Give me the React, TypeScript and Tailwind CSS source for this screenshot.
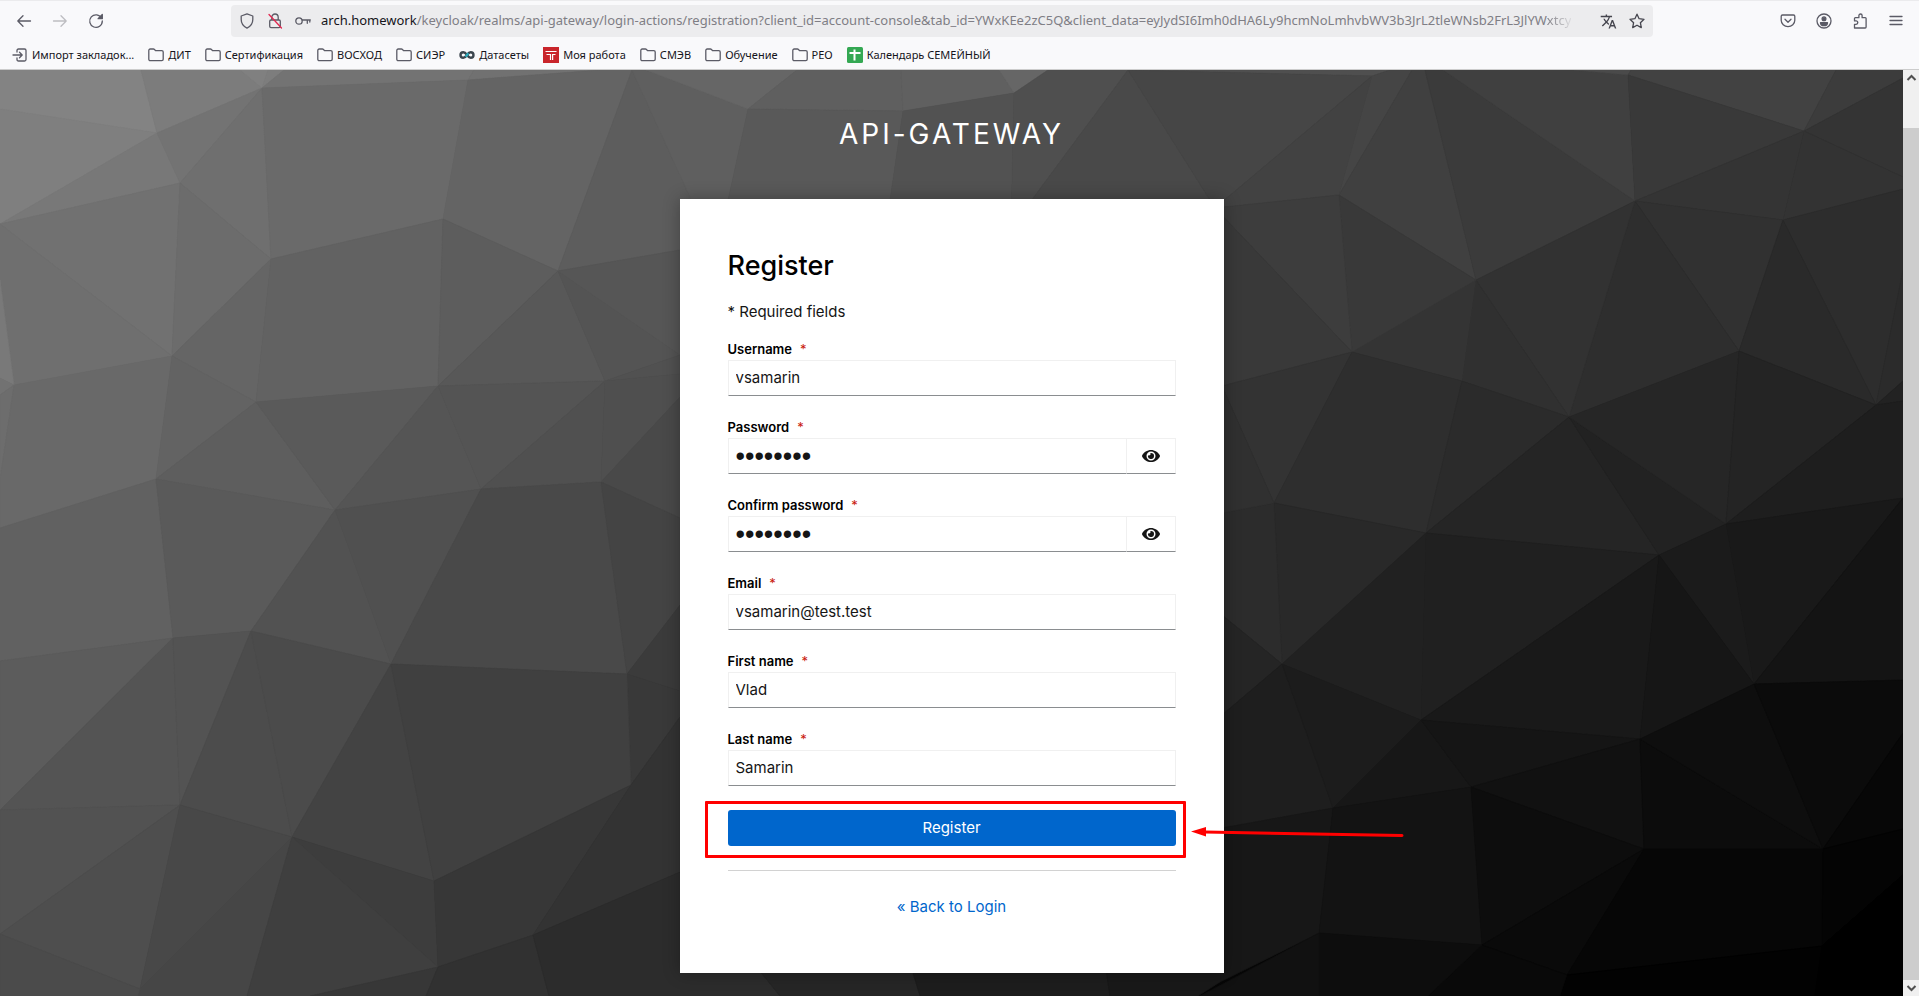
import type { ReactNode } from "react";
import { FaEye } from "react-icons/fa";
import { MdTranslate } from "react-icons/md";

type Facet = [fill: string, points: string];

const FACETS: Facet[] = [
  ["#838383", "0,0 141,0 157,63 0,39"],
  ["#7c7c7c", "141,0 240,0 262,18 157,63"],
  ["#808080", "240,0 268,0 262,18"],
  ["#7d7d7d", "268,0 284,0 262,18"],
  ["#7f7f7f", "0,39 157,63 0,154"],
  ["#787878", "157,63 180,113 0,154"],
  ["#737373", "157,63 262,18 180,113"],
  ["#6f6f6f", "262,18 271,189 180,113"],
  ["#737373", "284,0 474,0 468,10 262,18"],
  ["#6a6a6a", "262,18 468,10 443,149 271,189"],
  ["#717171", "474,0 600,0 468,10"],
  ["#646464", "468,10 600,0 632,0 558,201 443,149"],
  ["#5d5d5d", "632,0 704,158 680,180 558,201"],
  ["#5f5f5f", "632,0 646,0 748,39 722,158 704,158"],
  ["#666666", "646,0 797,0 748,39"],
  ["#5f5f5f", "797,0 901,0 903,41 748,39"],
  ["#606060", "901,0 999,0 1014,23 903,41"],
  ["#666666", "999,0 1048,0 1014,23"],
  ["#595959", "748,39 903,41 886,158 722,158"],
  ["#525252", "903,41 1014,23 1011,158 886,158"],
  ["#4f4f4f", "1014,23 1048,0 1128,0 1011,158"],
  ["#494949", "1128,0 1215,138 1011,158"],
  ["#4f4f4f", "1128,0 1390,0 1372,6"],
  ["#464646", "1128,0 1372,6 1215,138"],
  ["#424242", "1372,6 1339,125 1215,138"],
  ["#454545", "1372,6 1390,0 1412,0 1339,125"],
  ["#404040", "1412,0 1425,0 1476,210 1339,125"],
  ["#3b3b3b", "1425,0 1443,0 1635,131 1476,210"],
  ["#404040", "1443,0 1574,0 1628,5 1635,131"],
  ["#4a4a4a", "1574,0 1631,0 1628,5"],
  ["#424242", "1631,0 1836,0 1804,61 1628,5"],
  ["#393939", "1628,5 1804,61 1635,131"],
  ["#3c3c3c", "1836,0 1903,0 1903,8 1804,61"],
  ["#343434", "1804,61 1903,8 1903,107"],
  ["#333333", "1804,61 1903,107 1903,119 1783,150"],
  ["#343434", "1804,61 1783,150 1635,131"],
  ["#313131", "1635,131 1783,150 1739,281"],
  ["#2d2d2d", "1783,150 1903,119 1903,200 1876,335"],
  ["#2a2a2a", "1783,150 1876,335 1739,281"],
  ["#2b2b2b", "1876,335 1903,200 1903,311"],
  ["#2e2e2e", "1635,131 1739,281 1569,347"],
  ["#323232", "1635,131 1569,347 1476,210"],
  ["#303030", "1476,210 1569,347 1462,311"],
  ["#343434", "1476,210 1462,311 1352,282"],
  ["#393939", "1339,125 1476,210 1352,282"],
  ["#3d3d3d", "1339,125 1352,282 1215,138"],
  ["#393939", "1215,138 1352,282 1222,316"],
  ["#333333", "1352,282 1274,433 1222,316"],
  ["#2e2e2e", "1352,282 1462,311 1426,463 1274,433"],
  ["#2b2b2b", "1462,311 1569,347 1426,463"],
  ["#252525", "1569,347 1426,463 1659,485"],
  ["#222222", "1569,347 1726,454 1659,485"],
  ["#262626", "1569,347 1739,281 1726,454"],
  ["#242424", "1739,281 1876,335 1726,454"],
  ["#222222", "1876,335 1903,311 1903,331"],
  ["#1e1e1e", "1876,335 1903,331 1903,428 1726,454"],
  ["#191919", "1726,454 1903,428 1754,614"],
  ["#141414", "1754,614 1903,428 1903,610"],
  ["#1b1b1b", "1726,454 1659,485 1754,614"],
  ["#202020", "1426,463 1659,485 1421,650"],
  ["#292929", "1274,433 1426,463 1282,594"],
  ["#212121", "1282,594 1426,463 1421,650"],
  ["#191919", "1659,485 1421,650 1640,669"],
  ["#161616", "1659,485 1754,614 1640,669"],
  ["#2c2c2c", "1274,433 1282,594 1222,545 1222,443"],
  ["#303030", "1222,316 1274,433 1222,443"],
  ["#252525", "1282,594 1222,545 1222,645"],
  ["#1e1e1e", "1222,645 1282,594 1333,738 1222,758"],
  ["#1c1c1c", "1282,594 1421,650 1333,738"],
  ["#171717", "1421,650 1333,738 1471,717"],
  ["#151515", "1421,650 1471,717 1640,669"],
  ["#111111", "1640,669 1471,717 1644,779"],
  ["#0c0c0c", "1640,669 1644,779 1823,779"],
  ["#0e0e0e", "1640,669 1754,614 1823,779"],
  ["#0b0b0b", "1754,614 1903,610 1903,663 1823,779"],
  ["#070707", "1823,779 1903,663 1903,759"],
  ["#171717", "1333,738 1222,758 1220,912 1319,863"],
  ["#131313", "1333,738 1471,717 1482,875 1319,863"],
  ["#0d0d0d", "1471,717 1644,779 1482,875"],
  ["#0a0a0a", "1644,779 1482,875 1567,905"],
  ["#060606", "1644,779 1823,779 1822,876 1567,905"],
  ["#040404", "1823,779 1903,759 1903,805 1822,876"],
  ["#000000", "1822,876 1903,805 1903,926 1815,926"],
  ["#020202", "1567,905 1822,876 1815,926 1560,926"],
  ["#090909", "1482,875 1567,905 1560,926 1428,926"],
  ["#0d0d0d", "1319,863 1482,875 1428,926 1319,926"],
  ["#111111", "1319,863 1319,926 1200,926"],
  ["#717171", "0,154 180,113 172,286"],
  ["#6f6f6f", "0,154 172,286 14,315 0,210"],
  ["#797979", "0,210 14,315 0,308"],
  ["#727272", "0,308 14,315 0,325"],
  ["#6d6d6d", "14,315 0,325 0,410"],
  ["#6c6c6c", "180,113 271,189 172,286"],
  ["#656565", "271,189 256,332 172,286"],
  ["#626262", "271,189 443,149 438,316 256,332"],
  ["#5d5d5d", "443,149 558,201 438,316"],
  ["#585858", "558,201 605,311 438,316"],
  ["#545454", "558,201 680,285 605,311"],
  ["#565656", "558,201 680,180 680,285"],
  ["#696969", "14,315 172,286 156,409 0,458 0,410"],
  ["#636363", "172,286 256,332 156,409"],
  ["#5e5e5e", "256,332 156,409 335,440"],
  ["#5a5a5a", "256,332 438,316 335,440"],
  ["#555555", "438,316 481,419 335,440"],
  ["#545454", "438,316 605,311 481,419"],
  ["#505050", "605,311 601,412 481,419"],
  ["#515151", "605,311 680,285 680,304"],
  ["#4f4f4f", "605,311 680,304 680,327 601,412"],
  ["#494949", "601,412 680,327 680,448"],
  ["#616161", "0,458 156,409 173,568 0,591"],
  ["#5a5a5a", "156,409 335,440 251,561 173,568"],
  ["#525252", "335,440 391,594 251,561"],
  ["#505050", "335,440 481,419 391,594"],
  ["#494949", "481,419 601,412 627,604 391,594"],
  ["#444444", "601,412 680,448 680,535 627,604"],
  ["#3b3b3b", "627,604 680,535 680,621"],
  ["#393939", "627,604 680,621 680,647 631,715"],
  ["#5c5c5c", "0,591 173,568 0,740"],
  ["#545454", "173,568 180,735 0,740"],
  ["#535353", "173,568 251,561 180,735"],
  ["#4c4c4c", "251,561 180,735 292,767"],
  ["#4b4b4b", "251,561 391,594 292,767"],
  ["#434343", "391,594 292,767 434,811"],
  ["#404040", "391,594 627,604 631,715 434,811"],
  ["#525252", "0,740 180,735 0,864"],
  ["#4e4e4e", "180,735 140,919 0,864"],
  ["#484848", "180,735 292,767 140,919"],
  ["#464646", "140,919 292,767 247,926 138,926"],
  ["#4b4b4b", "0,864 140,919 138,926 0,926"],
  ["#3d3d3d", "292,767 434,811 438,897"],
  ["#3f3f3f", "292,767 438,897 310,926 247,926"],
  ["#373737", "434,811 631,715 533,865 438,897"],
  ["#333333", "631,715 680,647 680,802 533,865"],
  ["#373737", "438,897 310,926 426,926"],
  ["#313131", "438,897 533,865 549,926 426,926"],
  ["#2c2c2c", "533,865 680,802 780,926 549,926"],
  ["#262626", "680,802 900,860 920,926 780,926"],
  ["#1d1d1d", "900,860 1100,860 1110,926 920,926"],
  ["#191919", "1100,860 1222,860 1220,912 1198,926 1110,926"],
];

function Backdrop() {
  return (
    <svg
      className="absolute inset-0 size-full"
      viewBox="0 0 1903 926"
      preserveAspectRatio="none"
      aria-hidden="true"
    >
      <defs>
        <linearGradient id="base" x1="0" y1="0" x2="1" y2="0.6">
          <stop offset="0" stopColor="#707070" />
          <stop offset="0.5" stopColor="#2b2b2b" />
          <stop offset="0.7" stopColor="#151515" />
          <stop offset="1" stopColor="#000" />
        </linearGradient>
      </defs>
      <rect width="1903" height="926" fill="url(#base)" />
      {FACETS.map(([fill, points], i) => (
        <polygon key={i} points={points} fill={fill} stroke={fill} strokeWidth="0.6" />
      ))}
    </svg>
  );
}

function Icon({ children, size = 16 }: { children: ReactNode; size?: number }) {
  return (
    <svg
      width={size}
      height={size}
      viewBox="0 0 16 16"
      fill="none"
      stroke="currentColor"
      strokeWidth="1.3"
      strokeLinecap="round"
      strokeLinejoin="round"
      aria-hidden="true"
      className="shrink-0"
    >
      {children}
    </svg>
  );
}

function ToolButton({ label, children, dim }: { label: string; children: ReactNode; dim?: boolean }) {
  return (
    <button
      type="button"
      aria-label={label}
      className={`flex size-8 items-center justify-center ${dim ? "text-[#bdbdc1]" : "text-[#5b5b66]"}`}
    >
      {children}
    </button>
  );
}

const FolderIcon = (
  <Icon>
    <path d="M.8 12.2V3.4c0-.8.6-1.4 1.4-1.4h3.2c.5 0 .8.2 1.1.5l1 1.2h6.3c.8 0 1.4.6 1.4 1.4v7.1c0 .8-.6 1.4-1.4 1.4H2.2c-.8 0-1.4-.6-1.4-1.4z" />
  </Icon>
);

const ImportIcon = (
  <Icon>
    <path d="M5 5V3.5C5 2.5 5.5 2 6.5 2h6c1 0 1.5.5 1.5 1.5v9c0 1-.5 1.5-1.5 1.5h-6C5.5 14 5 13.5 5 12.5V11M1 8h9M7.500 5.300 10.200 8l-2.700 2.700" />
  </Icon>
);

const InfinityIcon = (
  <svg width="16" height="16" viewBox="0 0 16 16" fill="none" strokeWidth="2.4" aria-hidden="true" className="shrink-0">
    <path d="M8 8C6.500 5.800 5.600 5.200 4.300 5.200a2.800 2.800 0 0 0 0 5.600C5.600 10.800 6.800 9.700 8 8" stroke="#3b454d" />
    <path d="M8 8c1.500 2.200 2.400 2.800 3.700 2.800a2.800 2.800 0 0 0 0-5.600C10.400 5.200 9.200 6.300 8 8" stroke="#3b454d" />
    <path d="M6.600 9.800 9.400 6.200" stroke="#2aa7b8" />
  </svg>
);

const WorkIcon = (
  <svg width="16" height="16" viewBox="0 0 16 16" aria-hidden="true" className="shrink-0">
    <rect width="16" height="16" fill="#c9252b" />
    <path d="M2.500 4.500h11M3.500 7.500h4V13M12.500 7.500H9.600V13" fill="none" stroke="#fff" strokeWidth="1.2" />
  </svg>
);

const SheetIcon = (
  <svg width="16" height="16" viewBox="0 0 16 16" aria-hidden="true" className="shrink-0">
    <rect width="16" height="16" rx="1.5" fill="#34a853" />
    <path d="M2.500 6h11M7.500 2.500v11" stroke="#fff" strokeWidth="2" />
  </svg>
);

const BOOKMARKS: { label: string; icon: ReactNode }[] = [
  { label: "Импорт закладок...", icon: ImportIcon },
  { label: "ДИТ", icon: FolderIcon },
  { label: "Сертификация", icon: FolderIcon },
  { label: "ВОСХОД", icon: FolderIcon },
  { label: "СИЭР", icon: FolderIcon },
  { label: "Датасеты", icon: InfinityIcon },
  { label: "Моя работа", icon: WorkIcon },
  { label: "СМЭВ", icon: FolderIcon },
  { label: "Обучение", icon: FolderIcon },
  { label: "РЕО", icon: FolderIcon },
  { label: "Календарь СЕМЕЙНЫЙ", icon: SheetIcon },
];

function BrowserChrome() {
  return (
    <header className="border-t border-b border-t-[#ebebed] border-b-[#cccccc] bg-[#f9f9fb] font-['Noto_Sans','Open_Sans',sans-serif] text-[#15141a]">
      <div className="flex h-10 items-center pr-[7px] pl-2">
        <div className="flex gap-1">
          <ToolButton label="Back">
            <Icon><path d="M14.500 8H1.800M7 2.800 1.800 8 7 13.200" /></Icon>
          </ToolButton>
          <ToolButton label="Forward" dim>
            <Icon><path d="M1.500 8h12.700M9 2.800 14.200 8 9 13.200" /></Icon>
          </ToolButton>
          <ToolButton label="Reload">
            <Icon>
              <path d="M13.600 5.200A6.300 6.300 0 1 0 14.300 8" />
              <path d="M14.300 1.500v4.200h-4.200z" fill="currentColor" />
            </Icon>
          </ToolButton>
        </div>
        <div className="mr-[119px] ml-[119px] flex h-8 min-w-0 flex-1 items-center rounded bg-[#ececee] pr-2 pl-2 text-[#5b5b66]">
          <div className="flex shrink-0 items-center gap-3 pr-2.5">
            <Icon><path d="M8 .9 13.800 3v3.600c0 4-2.200 6.900-5.800 8.500C4.400 13.500 2.200 10.600 2.200 6.600V3z" /></Icon>
            <Icon>
              <path d="M4.800 7V4.200a3.200 3.200 0 0 1 6.400 0V7M4 7h8c.8 0 1.300.5 1.300 1.300v5c0 .8-.5 1.300-1.300 1.300H4c-.8 0-1.300-.5-1.300-1.300v-5C2.700 7.500 3.200 7 4 7z" />
              <path d="M2 1.500 14.500 15" stroke="#e22850" />
            </Icon>
            <Icon>
              <circle cx="4" cy="8" r="3.2" />
              <path d="M7.200 7h8.100M12.300 7v3.300M14.800 7v2" />
            </Icon>
          </div>
          <div className="min-w-0 flex-1 overflow-hidden text-[13px] whitespace-nowrap text-[#7f7e85]">
            <span className="text-[#15141a]">arch.homework</span>
            /keycloak/realms/api-gateway/login-actions/registration?client_id=account-console&amp;tab_id=YWxKEe2zC5Q&amp;client_data=eyJydSI6Imh0dHA6Ly9hcmNoLmhvbWV3b3JrL2tleWNsb2FrL3JlYW
            <span className="bg-linear-to-r from-[#7f7e85] to-[#dcdcde] bg-clip-text text-transparent">xtcy</span>
          </div>
          <div className="flex shrink-0 items-center gap-3 pl-2 text-[#45454e]">
            <MdTranslate size={17} />
            <Icon><path d="m8 1.200 2.100 4.500 4.900.6-3.600 3.400.9 4.900L8 12.200l-4.300 2.400.9-4.900L1 6.300l4.900-.6z" /></Icon>
          </div>
        </div>
        <div className="flex gap-1">
          <ToolButton label="Save to Pocket">
            <Icon>
              <path d="M2.500 2h11c.8 0 1.300.5 1.300 1.300v4a6.800 6.400 0 0 1-13.600 0v-4C1.200 2.500 1.700 2 2.500 2z" />
              <path d="m5 6.300 3 2.900 3-2.900" />
            </Icon>
          </ToolButton>
          <ToolButton label="Account">
            <Icon>
              <circle cx="8" cy="8" r="7" />
              <circle cx="8" cy="5.8" r="1.9" fill="currentColor" />
              <path d="M4.500 9.700h7c0 1.900-1.500 3-3.500 3s-3.500-1.100-3.500-3z" fill="currentColor" />
            </Icon>
          </ToolButton>
          <ToolButton label="Extensions">
            <Icon>
              <path d="M2.500 15V11.300h1.600a1.700 1.700 0 0 0 0-3.400H2.500V5.600c0-.6.3-.9.9-.9h3.500V2.600a1.600 1.600 0 0 1 3.200 0v2.100h3.100c.6 0 .9.3.9.9V14c0 .6-.3 1-.9 1z" />
            </Icon>
          </ToolButton>
          <ToolButton label="Menu">
            <Icon><path d="M2 3.500h12M2 7.500h12M2 11.500h12" /></Icon>
          </ToolButton>
        </div>
      </div>
      <nav aria-label="Bookmarks" className="flex h-7 items-center gap-3.5 pl-3 text-[11px] text-[#5b5b66]">
        {BOOKMARKS.map(({ label, icon }) => (
          <a key={label} href="#" className="flex items-center gap-1 whitespace-nowrap">
            {icon}
            <span className="text-[#15141a]">{label}</span>
          </a>
        ))}
      </nav>
    </header>
  );
}

interface FieldProps {
  id: string;
  label: string;
  value: string;
  type?: "text" | "password" | "email";
}

function Field({ id, label, value, type = "text" }: FieldProps) {
  const font =
    type === "password" ? "font-['Liberation_Sans',sans-serif] text-[27px] leading-8" : "text-[15px]";
  return (
    <div>
      <label htmlFor={id} className="block text-[13px] leading-[22px] font-semibold text-black">
        {label}
        <span className="ml-2 font-normal text-[#c9190b]" aria-hidden="true">*</span>
      </label>
      <div className="flex h-9">
        <input
          id={id}
          type={type}
          defaultValue={value}
          required
          className={`min-w-0 flex-1 border border-[#f0f0f0] border-b-[#8a8d90] bg-white px-[7px] text-[#151515] outline-none ${font}`}
        />
        {type === "password" && (
          <button
            type="button"
            aria-label={`Show ${label.toLowerCase()}`}
            className="flex w-[49px] items-center justify-center border border-l-0 border-[#f0f0f0] border-b-[#8a8d90]"
          >
            <FaEye size={18} />
          </button>
        )}
      </div>
    </div>
  );
}

function Callout() {
  return (
    <>
      <div className="pointer-events-none absolute -top-[9px] -right-2.5 -bottom-3 -left-[23px] rounded-[1px] border-3 border-[#ff0000]" />
      <svg
        width="214"
        height="14"
        viewBox="0 0 214 14"
        aria-hidden="true"
        className="pointer-events-none absolute top-4 left-full ml-[15px]"
      >
        <path d="M14 6 211 9.500" stroke="#f00" strokeWidth="3" strokeLinecap="round" />
        <path d="M0 5.500 15 1v9.500z" fill="#f00" />
      </svg>
    </>
  );
}

function Scrollbar() {
  return (
    <div className="flex w-4 shrink-0 flex-col bg-[#f0f0f0] text-[#505050]" aria-hidden="true">
      <svg width="16" height="16" viewBox="0 0 16 16" fill="none" stroke="currentColor" strokeWidth="2">
        <path d="m4.500 10 4-4 4 4" />
      </svg>
      <div className="mt-[42px] flex-1 bg-[#cdcdcd]" />
      <svg width="16" height="16" viewBox="0 0 16 16" fill="none" stroke="currentColor" strokeWidth="2">
        <path d="m4.500 6 4 4 4-4" />
      </svg>
    </div>
  );
}

export default function App() {
  return (
    <div className="flex min-h-screen flex-col">
      <BrowserChrome />
      <div className="flex flex-1">
        <main className="relative flex min-w-0 flex-1 flex-col items-center overflow-hidden px-4 pb-[22px] font-['Inter','Roboto',sans-serif] text-[#151515]">
          <Backdrop />
          <h1 className="relative pt-[43px] pb-[44px] text-[28px] leading-[42px] tracking-[3px] text-white uppercase">
            API-Gateway
          </h1>
          <section className="relative w-full max-w-[544px] bg-white px-12 pb-[30px] shadow-[0_0_16px_rgba(0,0,0,0.3)]">
            <h2 className="pt-[49px] text-[27px] leading-9 font-medium text-black">Register</h2>
            <p className="mt-4 text-[15px] leading-6">* Required fields</p>
            <form className="mt-3.5" onSubmit={(e) => e.preventDefault()}>
              <div className="flex flex-col gap-5">
                <Field id="username" label="Username" value="vsamarin" />
                <Field id="password" label="Password" value="password" type="password" />
                <Field id="confirm" label="Confirm password" value="password" type="password" />
                <Field id="email" label="Email" value="vsamarin@test.test" type="email" />
                <Field id="first" label="First name" value="Vlad" />
                <Field id="last" label="Last name" value="Samarin" />
              </div>
              <div className="relative mt-6">
                <button type="submit" className="h-9 w-full rounded-[3px] bg-[#0066cc] text-[15px] text-white">
                  Register
                </button>
                <Callout />
              </div>
            </form>
            <hr className="mt-6 border-[#d2d2d2]" />
            <p className="mt-6 pb-6 text-center text-[15px] leading-6">
              <a href="#" className="text-[#0066cc]">« Back to Login</a>
            </p>
          </section>
        </main>
        <Scrollbar />
      </div>
    </div>
  );
}
